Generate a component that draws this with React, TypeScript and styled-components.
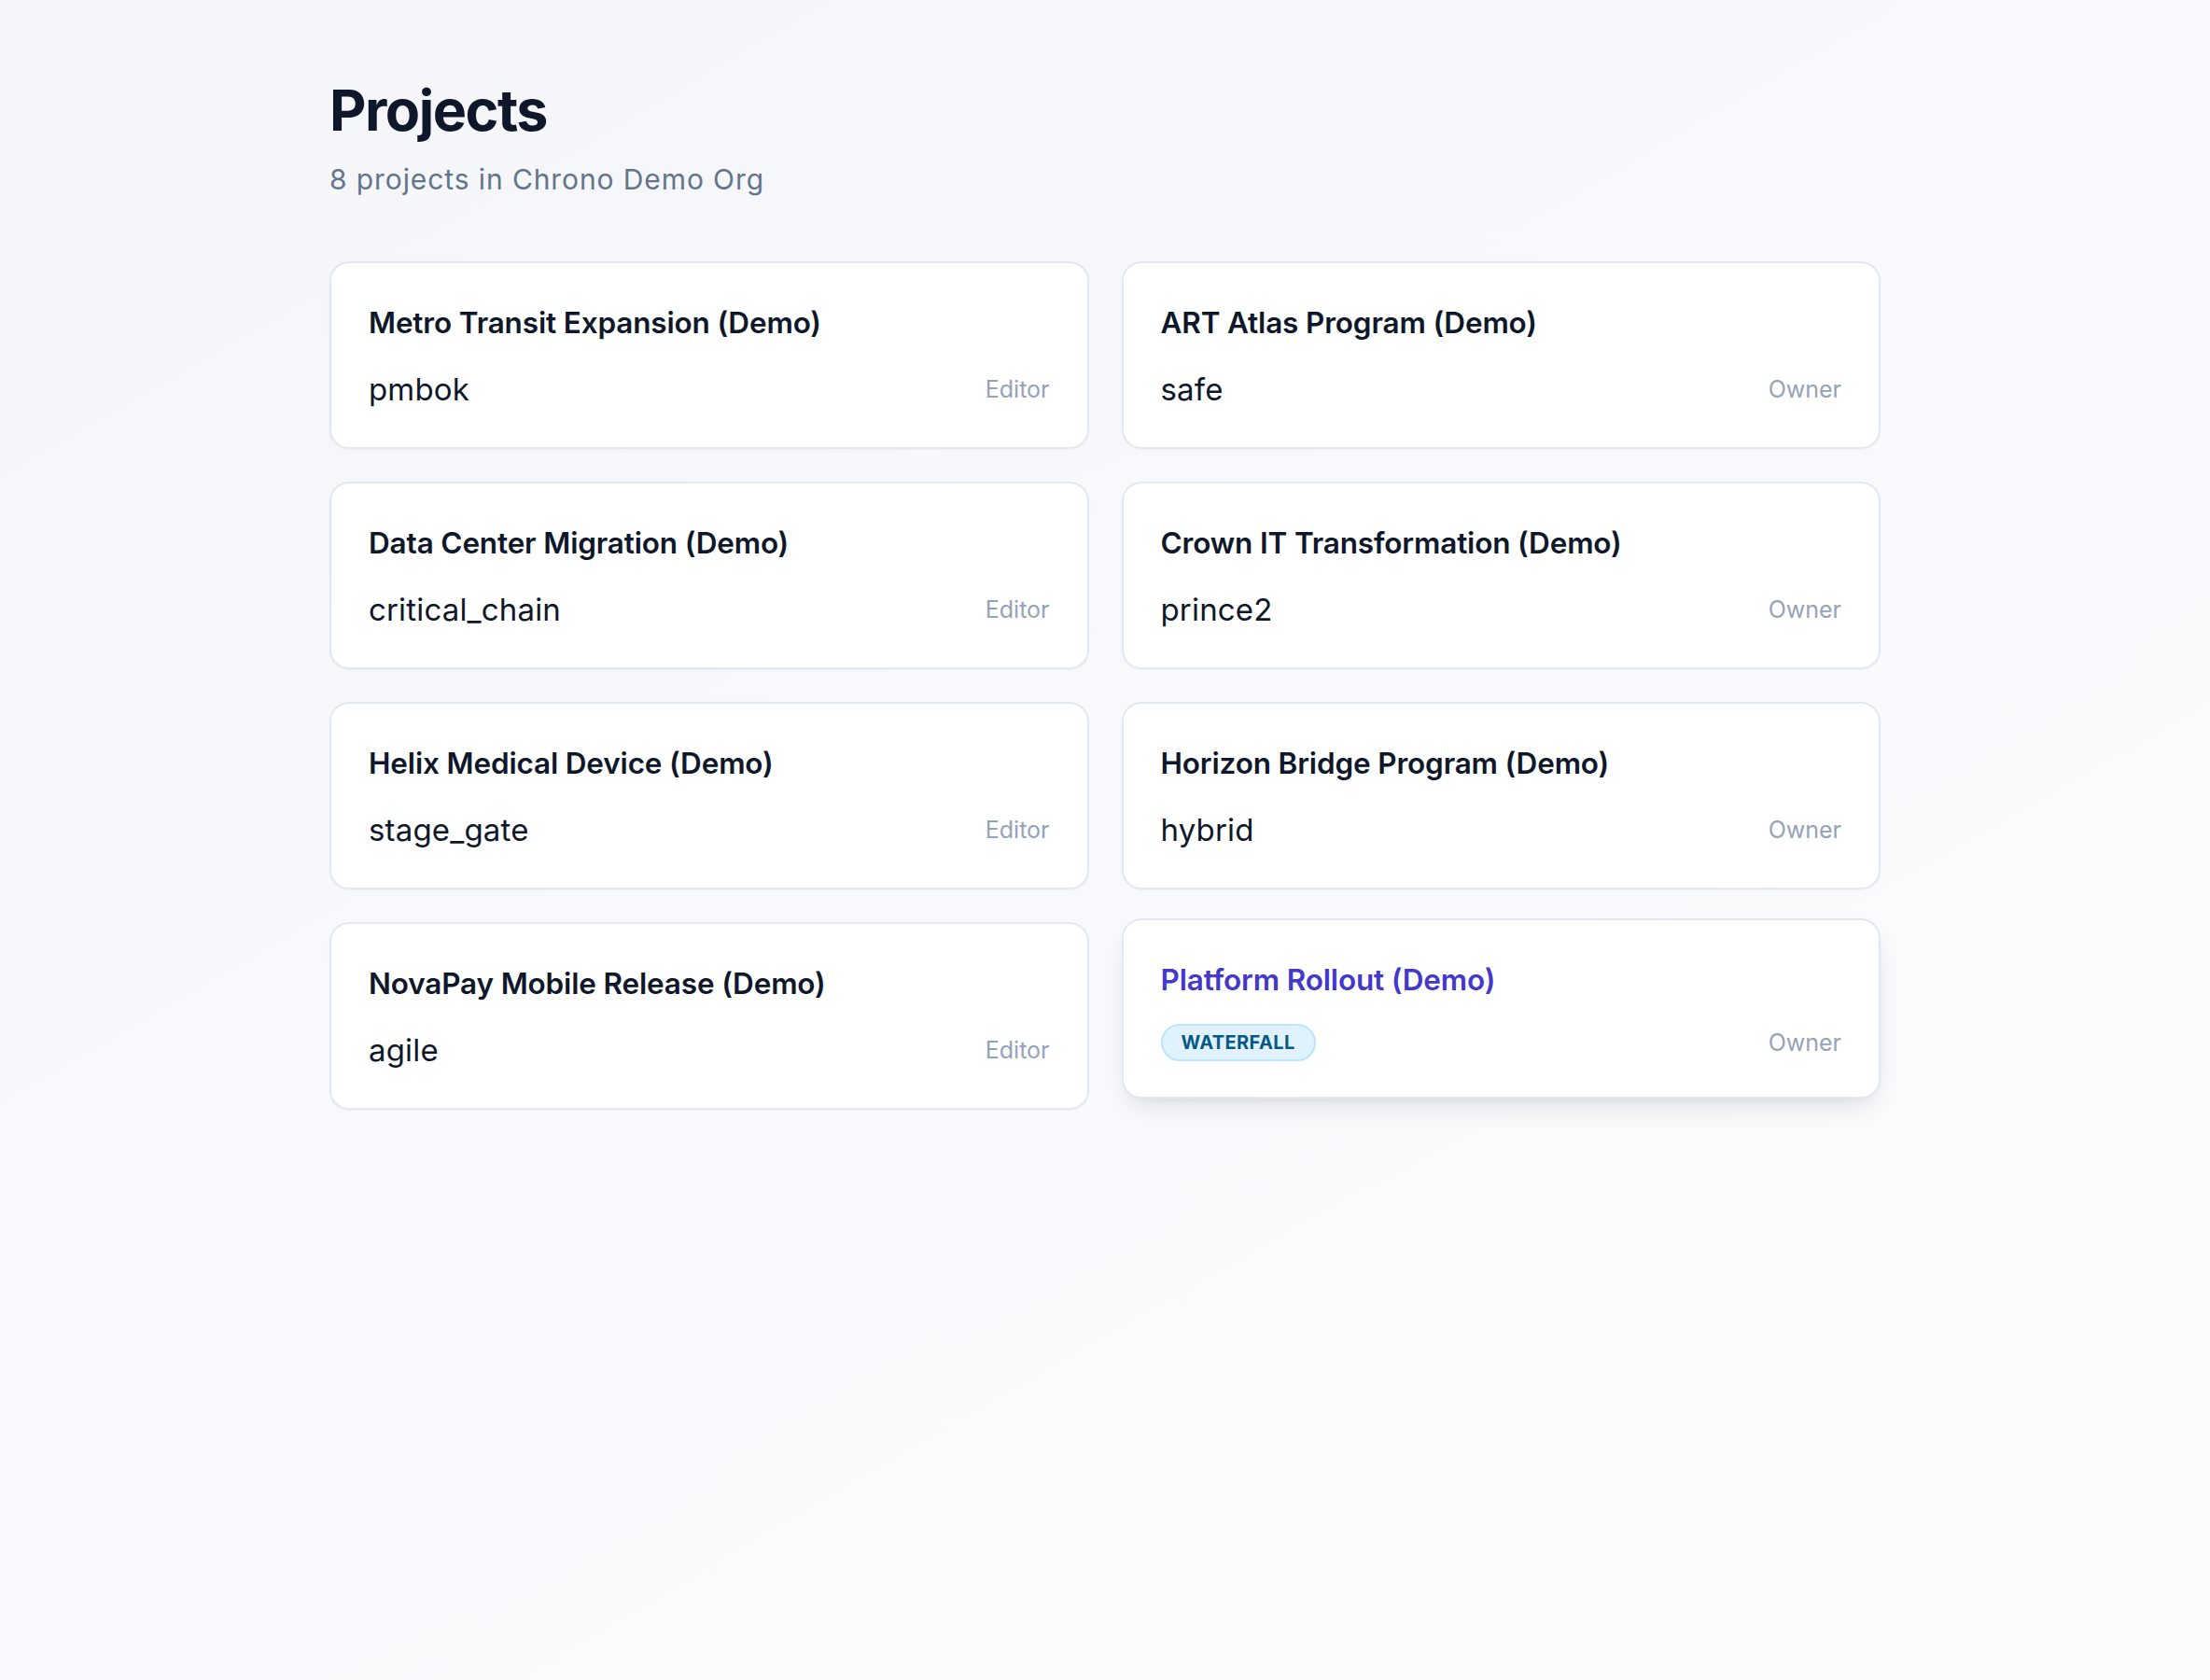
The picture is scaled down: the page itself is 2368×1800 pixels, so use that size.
import React from "react";
import styled, { createGlobalStyle } from "styled-components";

type Project = {
  id: number;
  name: string;
  framework: string;
  role: "Editor" | "Owner";
};

const projects: Project[] = [
  { id: 1, name: "Metro Transit Expansion (Demo)", framework: "pmbok", role: "Editor" },
  { id: 2, name: "ART Atlas Program (Demo)", framework: "safe", role: "Owner" },
  { id: 3, name: "Data Center Migration (Demo)", framework: "critical_chain", role: "Editor" },
  { id: 4, name: "Crown IT Transformation (Demo)", framework: "prince2", role: "Owner" },
  { id: 5, name: "Helix Medical Device (Demo)", framework: "stage_gate", role: "Editor" },
  { id: 6, name: "Horizon Bridge Program (Demo)", framework: "hybrid", role: "Owner" },
  { id: 7, name: "NovaPay Mobile Release (Demo)", framework: "agile", role: "Editor" },
  { id: 8, name: "Platform Rollout (Demo)", framework: "waterfall", role: "Owner" },
];

const ACTIVE_ID = 8;

const App = () => {
  return (
    <>
      <GlobalStyle />
      <PageSC>
        <ContainerSC>
          <HeaderSC>
            <TitleSC>Projects</TitleSC>
            <SubtitleSC>{projects.length} projects in Chrono Demo Org</SubtitleSC>
          </HeaderSC>
          <GridSC>
            {projects.map((p) => {
              const active = p.id === ACTIVE_ID;
              return (
                <CardSC key={p.id} $active={active}>
                  <CardTitleSC $active={active}>{p.name}</CardTitleSC>
                  <CardRowSC>
                    {active ? (
                      <BadgeSC>{p.framework}</BadgeSC>
                    ) : (
                      <FrameworkSC>{p.framework}</FrameworkSC>
                    )}
                    <RoleSC>{p.role}</RoleSC>
                  </CardRowSC>
                </CardSC>
              );
            })}
          </GridSC>
        </ContainerSC>
      </PageSC>
    </>
  );
};

const GlobalStyle = createGlobalStyle`
  html, body {
    margin: 0;
    padding: 0;
  }
  body {
    font-family: Inter, "Noto Sans", "Liberation Sans", sans-serif;
    color: #0f172a;
  }
  * {
    box-sizing: border-box;
  }
`;

const PageSC = styled.div`
  min-height: 1800px;
  background: linear-gradient(150deg, #f3f5f9 0%, #f8f9fc 45%, #fcfcfe 100%);
  padding-top: 85px;
`;

const ContainerSC = styled.div`
  max-width: 1662px;
  margin: 0 auto;
`;

const HeaderSC = styled.header`
  display: flex;
  flex-direction: column;
  gap: 22px;
  margin-bottom: 68px;
`;

const TitleSC = styled.h1`
  margin: 0;
  font-size: 61px;
  line-height: 66px;
  font-weight: 700;
  letter-spacing: -0.025em;
  color: #0f172a;
`;

const SubtitleSC = styled.p`
  margin: 0;
  font-size: 30px;
  line-height: 39px;
  font-weight: 400;
  letter-spacing: 0.03em;
  color: #64748b;
`;

const GridSC = styled.div`
  display: grid;
  grid-template-columns: 1fr 1fr;
  gap: 35px;
  align-items: start;
`;

const CardSC = styled.div<{ $active?: boolean }>`
  background: #ffffff;
  border: 2px solid #e3e8f0;
  border-radius: 21px;
  padding: 44px 40px 38px;
  box-shadow: ${(p) =>
    p.$active
      ? "0 14px 30px -10px rgba(15, 23, 42, 0.14), 0 4px 10px -4px rgba(15, 23, 42, 0.06)"
      : "0 1px 3px rgba(15, 23, 42, 0.04)"};
  transform: ${(p) => (p.$active ? "translateY(-4px)" : "none")};
`;

const CardTitleSC = styled.h3<{ $active?: boolean }>`
  margin: 0;
  font-size: 31.5px;
  line-height: 40px;
  font-weight: 600;
  letter-spacing: -0.005em;
  color: ${(p) => (p.$active ? "#4338ca" : "#0f172a")};
`;

const CardRowSC = styled.div`
  display: flex;
  align-items: center;
  justify-content: space-between;
  margin-top: 27px;
`;

const FrameworkSC = styled.span`
  font-size: 33px;
  line-height: 48px;
  font-weight: 400;
  letter-spacing: 0.005em;
  color: #0f172a;
`;

const BadgeSC = styled.span`
  display: inline-flex;
  align-items: center;
  height: 40px;
  padding: 0 20px;
  border-radius: 999px;
  border: 2px solid #bae6fd;
  background: #e0f2fe;
  color: #075985;
  font-size: 20px;
  font-weight: 700;
  letter-spacing: 0.02em;
  text-transform: uppercase;
`;

const RoleSC = styled.span`
  font-size: 25px;
  line-height: 25px;
  font-weight: 400;
  color: #94a3b8;
`;

export default App;
